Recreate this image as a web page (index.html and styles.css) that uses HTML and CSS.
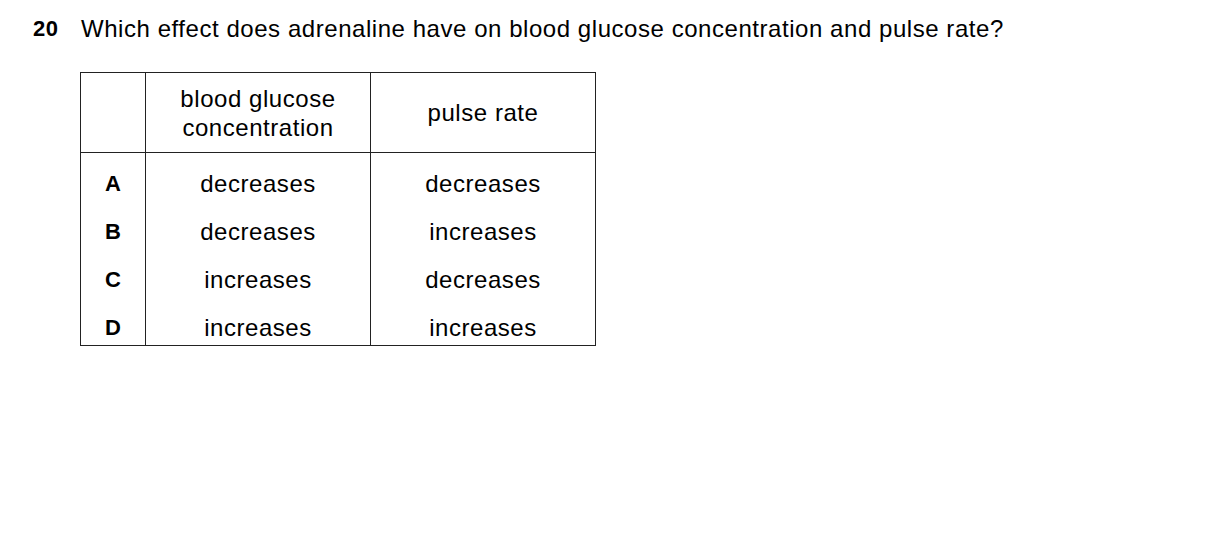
FILE: index.html
```html
<!DOCTYPE html>
<html>
<head>
<meta charset="utf-8">
<link rel="stylesheet" href="styles.css">
</head>
<body>
<div class="question">
  <span class="qnum">20</span>
  <span class="qtext">Which effect does adrenaline have on blood glucose concentration and pulse rate?</span>
</div>
<table class="answers">
  <thead>
    <tr>
      <th class="letter"></th>
      <th class="col">blood glucose<br>concentration</th>
      <th class="col">pulse rate</th>
    </tr>
  </thead>
  <tbody>
    <tr class="first"><td class="letter">A</td><td>decreases</td><td>decreases</td></tr>
    <tr><td class="letter">B</td><td>decreases</td><td>increases</td></tr>
    <tr><td class="letter">C</td><td>increases</td><td>decreases</td></tr>
    <tr class="last"><td class="letter">D</td><td>increases</td><td>increases</td></tr>
  </tbody>
</table>
</body>
</html>
```

FILE: styles.css
```css
html, body {
  margin: 0;
  padding: 0;
  background: #ffffff;
}
body {
  font-family: "Liberation Sans", Arial, sans-serif;
  font-size: 24px;
  letter-spacing: 0.55px;
  color: #000;
}
.question {
  display: flex;
  padding: 15px 0 0 33px;
  line-height: 28px;
}
.qnum {
  font-weight: bold;
  font-size: 22px;
  letter-spacing: 0.5px;
  width: 48px;
}
.answers {
  margin: 29px 0 0 80px;
  border-collapse: collapse;
  table-layout: fixed;
  width: 516px;
}
.answers th, .answers td {
  border-left: 1px solid #222;
  border-right: 1px solid #222;
  text-align: center;
  font-weight: normal;
  line-height: 28px;
  vertical-align: top;
}
.answers th {
  border-top: 1px solid #222;
  border-bottom: 1px solid #222;
  height: 79px;
  padding: 0;
  vertical-align: middle;
  line-height: 29px;
}
.answers th.letter { width: 64px; }
.answers td { padding: 10px 0 10px; }
.answers tr.first td { padding-top: 17px; }
.answers tr.last td { border-bottom: 1px solid #222; padding-bottom: 3px; }
.answers td.letter { font-weight: bold; font-size: 22px; letter-spacing: 0; }
```
